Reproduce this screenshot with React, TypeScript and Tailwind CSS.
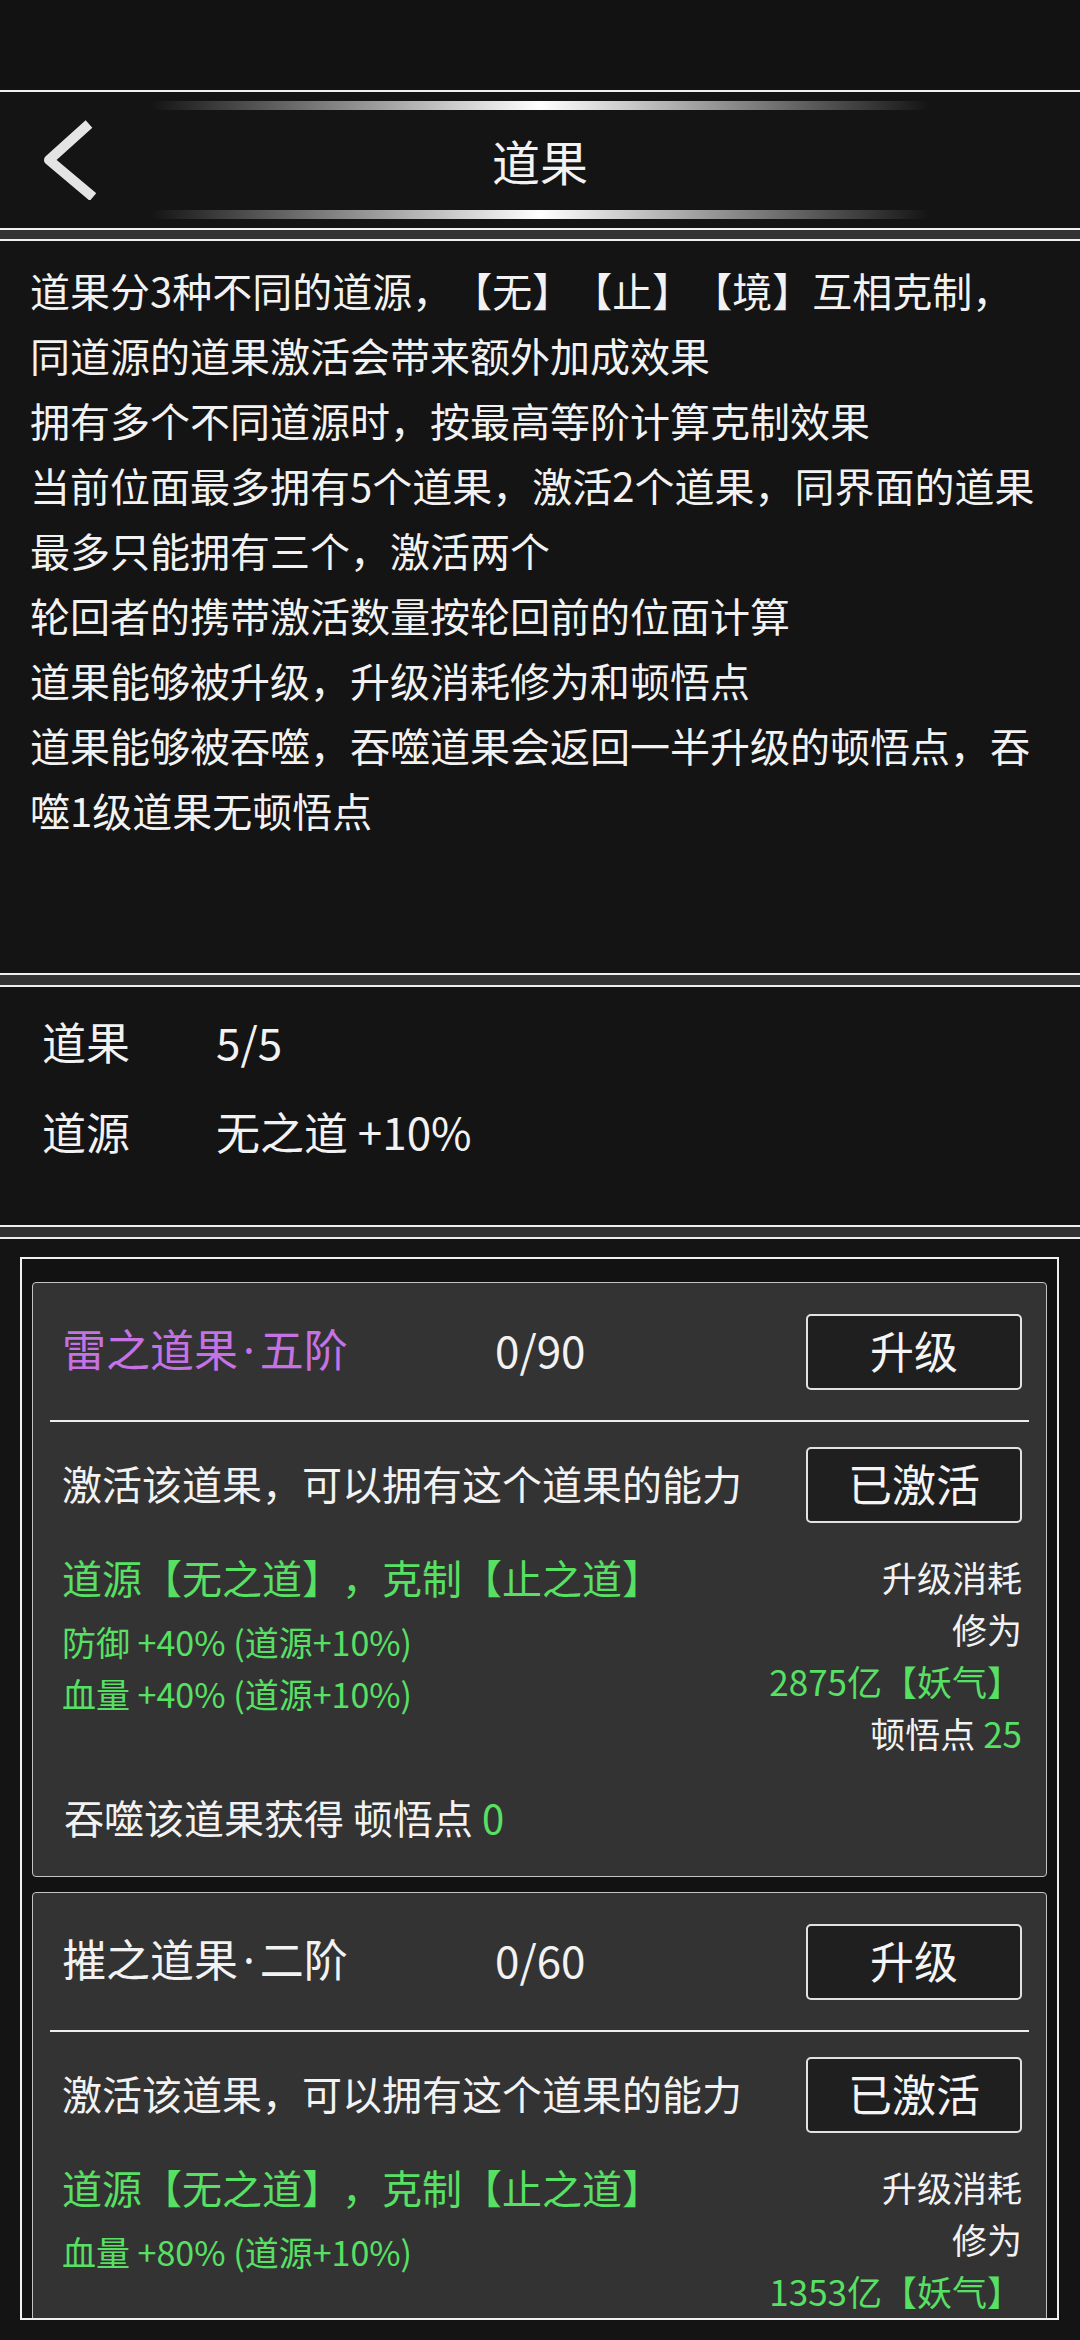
import React from "react";

const intro = [
  "道果分3种不同的道源，【无】【止】【境】互相克制，",
  "同道源的道果激活会带来额外加成效果",
  "拥有多个不同道源时，按最高等阶计算克制效果",
  "当前位面最多拥有5个道果，激活2个道果，同界面的道果",
  "最多只能拥有三个，激活两个",
  "轮回者的携带激活数量按轮回前的位面计算",
  "道果能够被升级，升级消耗修为和顿悟点",
  "道果能够被吞噬，吞噬道果会返回一半升级的顿悟点，吞",
  "噬1级道果无顿悟点",
];

type Fruit = {
  name: string;
  tier: string;
  nameColor: string;
  progress: string;
  stats: string[];
  cost: string;
  points: number;
  gain: number;
};

const fruits: Fruit[] = [
  {
    name: "雷之道果",
    tier: "五阶",
    nameColor: "text-[#c572e4]",
    progress: "0/90",
    stats: ["防御 +40% (道源+10%)", "血量 +40% (道源+10%)"],
    cost: "2875亿【妖气】",
    points: 25,
    gain: 0,
  },
  {
    name: "摧之道果",
    tier: "二阶",
    nameColor: "text-[#f2f2f2]",
    progress: "0/60",
    stats: ["血量 +80% (道源+10%)"],
    cost: "1353亿【妖气】",
    points: 10,
    gain: 0,
  },
];

const Streak = () => (
  <div className="h-[9px] w-full rounded-full bg-linear-to-r from-transparent via-white to-transparent" />
);

const Btn: React.FC<{ label: string }> = ({ label }) => (
  <button className="flex h-[76px] w-[216px] items-center justify-center rounded-[5px] border-2 border-[#e2e2e2] bg-[#1f1f1f] text-[44px] text-[#f4f4f4]">
    <span className="mb-[4px]">{label}</span>
  </button>
);

const FruitCard: React.FC<{ f: Fruit }> = ({ f }) => (
  <div className="shrink-0 rounded-[4px] border border-[#c4c4c4] bg-[#333333]">
    <div className="grid h-[137px] grid-cols-[433px_1fr_auto] items-center pl-[29px] pr-[24px]">
      <span className={`mb-[6px] whitespace-nowrap text-[44px] ${f.nameColor}`}>
        {f.name}
        <span className="mx-[5px] font-['Noto_Sans',sans-serif]">·</span>
        {f.tier}
      </span>
      <span className="mb-[6px] text-[44px] text-[#f2f2f2]">{f.progress}</span>
      <Btn label="升级" />
    </div>
    <div className="mx-[17px] h-[2px] bg-[#eeeeee]" />
    <div className="flex items-center justify-between pl-[29px] pr-[24px] pt-[25px]">
      <span className="mb-[4px] text-[40px] text-[#f2f2f2]">激活该道果，可以拥有这个道果的能力</span>
      <Btn label="已激活" />
    </div>
    <div className="mt-[28px] flex justify-between pl-[29px] pr-[24px]">
      <div className="flex flex-col text-[#58e065]">
        <span className="text-[40px] leading-[52px]">道源【无之道】，克制【止之道】</span>
        <div className="mt-[13px] flex flex-col text-[34px] leading-[52px]">
          {f.stats.map((s) => (
            <span key={s}>{s}</span>
          ))}
        </div>
      </div>
      <div className="flex flex-col items-end text-[35px] leading-[52px] text-[#f2f2f2]">
        <span>升级消耗</span>
        <span>修为</span>
        <span className="text-[#58e065]">{f.cost}</span>
        <span>
          顿悟点 <span className="text-[#58e065]">{f.points}</span>
        </span>
      </div>
    </div>
    <div className="mt-[32px] pb-[33px] pl-[31px] text-[40px] leading-[52px] text-[#f2f2f2]">
      吞噬该道果获得 顿悟点 <span className="text-[#58e065]">{f.gain}</span>
    </div>
  </div>
);

export default function App() {
  return (
    <div className="flex h-[2340px] w-[1080px] flex-col overflow-hidden bg-[#121212] font-['Noto_Sans_CJK_SC','Noto_Sans',sans-serif] text-[#f2f2f2] [text-spacing-trim:space-all]">
      <div className="h-[90px] shrink-0" />

      {/* header */}
      <header className="grid h-[140px] shrink-0 grid-cols-[151px_1fr_151px] border-y-2 border-[#f0f0f0] bg-[#141414]">
        <div className="flex items-center pl-[44px]">
          <svg width="52" height="80" viewBox="0 0 52 80">
            <polyline
              points="45,4 5,40 49,77"
              fill="none"
              stroke="#e4e4e4"
              strokeWidth="10"
              strokeLinejoin="round"
            />
          </svg>
        </div>
        <div className="flex flex-col items-center justify-between py-[9px]">
          <Streak />
          <h1 className="text-[48px] leading-none">道果</h1>
          <Streak />
        </div>
        <div />
      </header>

      <div className="h-[9px] shrink-0 bg-[#333333]" />

      {/* rules */}
      <section className="h-[736px] shrink-0 border-y-2 border-[#f0f0f0] bg-[#141414] pl-[30px] pt-[17px]">
        {intro.map((line) => (
          <p key={line} className="whitespace-nowrap text-[40px] leading-[65px]">
            {line}
          </p>
        ))}
      </section>

      <div className="h-[10px] shrink-0 bg-[#333333]" />

      {/* summary */}
      <section className="h-[242px] shrink-0 border-y-2 border-[#f0f0f0] bg-[#141414] pl-[42px] pt-[9px] text-[44px]">
        <div className="grid h-[90px] grid-cols-[174px_1fr] items-center">
          <span>道果</span>
          <span>5/5</span>
        </div>
        <div className="grid h-[90px] grid-cols-[174px_1fr] items-center">
          <span>道源</span>
          <span>无之道 +10%</span>
        </div>
      </section>

      <div className="h-[10px] shrink-0 bg-[#333333]" />

      {/* list */}
      <section className="flex-1 border-t-2 border-[#f0f0f0] bg-[#141414] pl-[20px] pr-[21px] pt-[18px]">
        <div className="flex h-[1063px] flex-col gap-[15px] overflow-hidden border-2 border-[#f0f0f0] bg-[#121212] px-[10px] pt-[23px]">
          {fruits.map((f) => (
            <FruitCard key={f.name} f={f} />
          ))}
        </div>
      </section>
    </div>
  );
}
